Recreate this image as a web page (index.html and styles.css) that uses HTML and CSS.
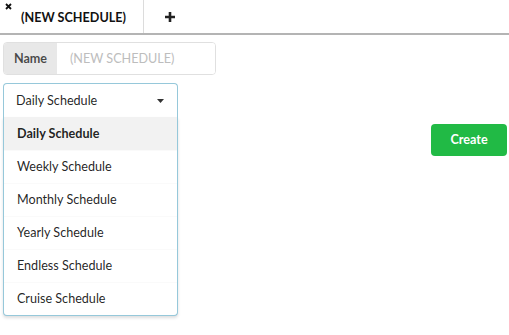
FILE: index.html
```html
<!DOCTYPE html>
<html>
<head>
<meta charset="utf-8">
<link rel="stylesheet" href="styles.css">
</head>
<body>
<div class="tabs">
  <div class="tab active">
    <svg class="tab-close" width="7" height="7" viewBox="0 0 7 7"><path d="M1 1l5 5M6 1L1 6" stroke="#111" stroke-width="1.8"/></svg>
    <span class="tab-title">(NEW SCHEDULE)</span>
  </div>
  <div class="tab add">
    <svg width="12" height="12" viewBox="0 0 12 12"><path d="M6 1v10M1 6h10" stroke="#222" stroke-width="2.6"/></svg>
  </div>
</div>
<div class="form">
  <div class="name-group">
    <div class="name-label">Name</div>
    <input class="name-input" type="text" placeholder="(NEW SCHEDULE)">
  </div>
  <div class="dropdown">
    <div class="dropdown-head">
      <span>Daily Schedule</span>
      <svg class="caret" width="7" height="4" viewBox="0 0 7 4"><path d="M0 0h7L3.5 4z" fill="#333"/></svg>
    </div>
    <div class="menu">
      <div class="item selected">Daily Schedule</div>
      <div class="item">Weekly Schedule</div>
      <div class="item">Monthly Schedule</div>
      <div class="item">Yearly Schedule</div>
      <div class="item">Endless Schedule</div>
      <div class="item">Cruise Schedule</div>
    </div>
  </div>
  <div class="actions">
    <button class="create">Create</button>
  </div>
</div>
</body>
</html>
```
FILE: styles.css
```css
* { box-sizing: border-box; }
html, body { min-height: 100%; height: 100%; }
body {
  margin: 0;
  font-family: Lato, "Open Sans", sans-serif;
  font-size: 12.6px;
  color: rgba(0,0,0,0.87);
  background: #fff;
}
.tabs {
  display: flex;
  height: 35px;
  border-bottom: 2px solid #b4b4b4;
}
.tab {
  position: relative;
  display: flex;
  align-items: center;
}
.tab.active {
  width: 144px;
  padding-left: 21px;
  border-right: 1px solid #dcdcdc;
}
.tab-close {
  position: absolute;
  left: 5px;
  top: 3px;
}
.tab-title {
  font-weight: bold;
  font-size: 12.6px;
  color: #111;
  padding-top: 1px;
}
.tab.add {
  padding-left: 20px;
  padding-top: 1px;
}
.form {
  padding: 7px 2px 0 3px;
  min-height: 300px;
}
.name-group {
  display: flex;
  width: 213px;
  height: 33px;
  border: 1px solid #e0e0e0;
  border-radius: 4px;
  overflow: hidden;
}
.name-label {
  width: 53px;
  background: #e8e8e8;
  font-weight: bold;
  color: rgba(0,0,0,0.7);
  display: flex;
  align-items: center;
  justify-content: center;
  padding-bottom: 1px;
}
.name-input {
  flex: 1;
  border: 0;
  outline: 0;
  font-family: inherit;
  font-size: 12.6px;
  padding: 0 0 1px 13px;
  min-width: 0;
}
.name-input::placeholder { color: #bdbdbd; }
.dropdown {
  position: relative;
  width: 175px;
  margin-top: 8px;
  z-index: 2;
}
.dropdown-head {
  height: 34px;
  border: 1px solid #96c8da;
  border-bottom: 0;
  border-radius: 4px 4px 0 0;
  display: flex;
  align-items: center;
  justify-content: space-between;
  padding: 0 13px 1px 12px;
}
.caret { margin-top: 1px; }
.menu {
  position: absolute;
  left: 0;
  right: 0;
  top: 100%;
  z-index: 3;
  background: #fff;
  border: 1px solid #96c8da;
  border-top: 0;
  border-radius: 0 0 4px 4px;
  box-shadow: 0 2px 3px rgba(34,36,38,0.15);
}
.item {
  height: 33px;
  display: flex;
  align-items: center;
  padding: 0 0 1px 13px;
  border-top: 1px solid #fafafa;
}
.item:first-child { border-top: 0; }
.item.selected {
  background: #f2f2f2;
  font-weight: bold;
}
.actions {
  display: flex;
  justify-content: flex-end;
  margin-top: 7px;
}
.create {
  width: 76px;
  height: 32px;
  border: 0;
  border-radius: 4px;
  background: #21ba45;
  color: #fff;
  font-family: inherit;
  font-size: 12.6px;
  font-weight: bold;
  padding: 0 0 1px;
}
```
